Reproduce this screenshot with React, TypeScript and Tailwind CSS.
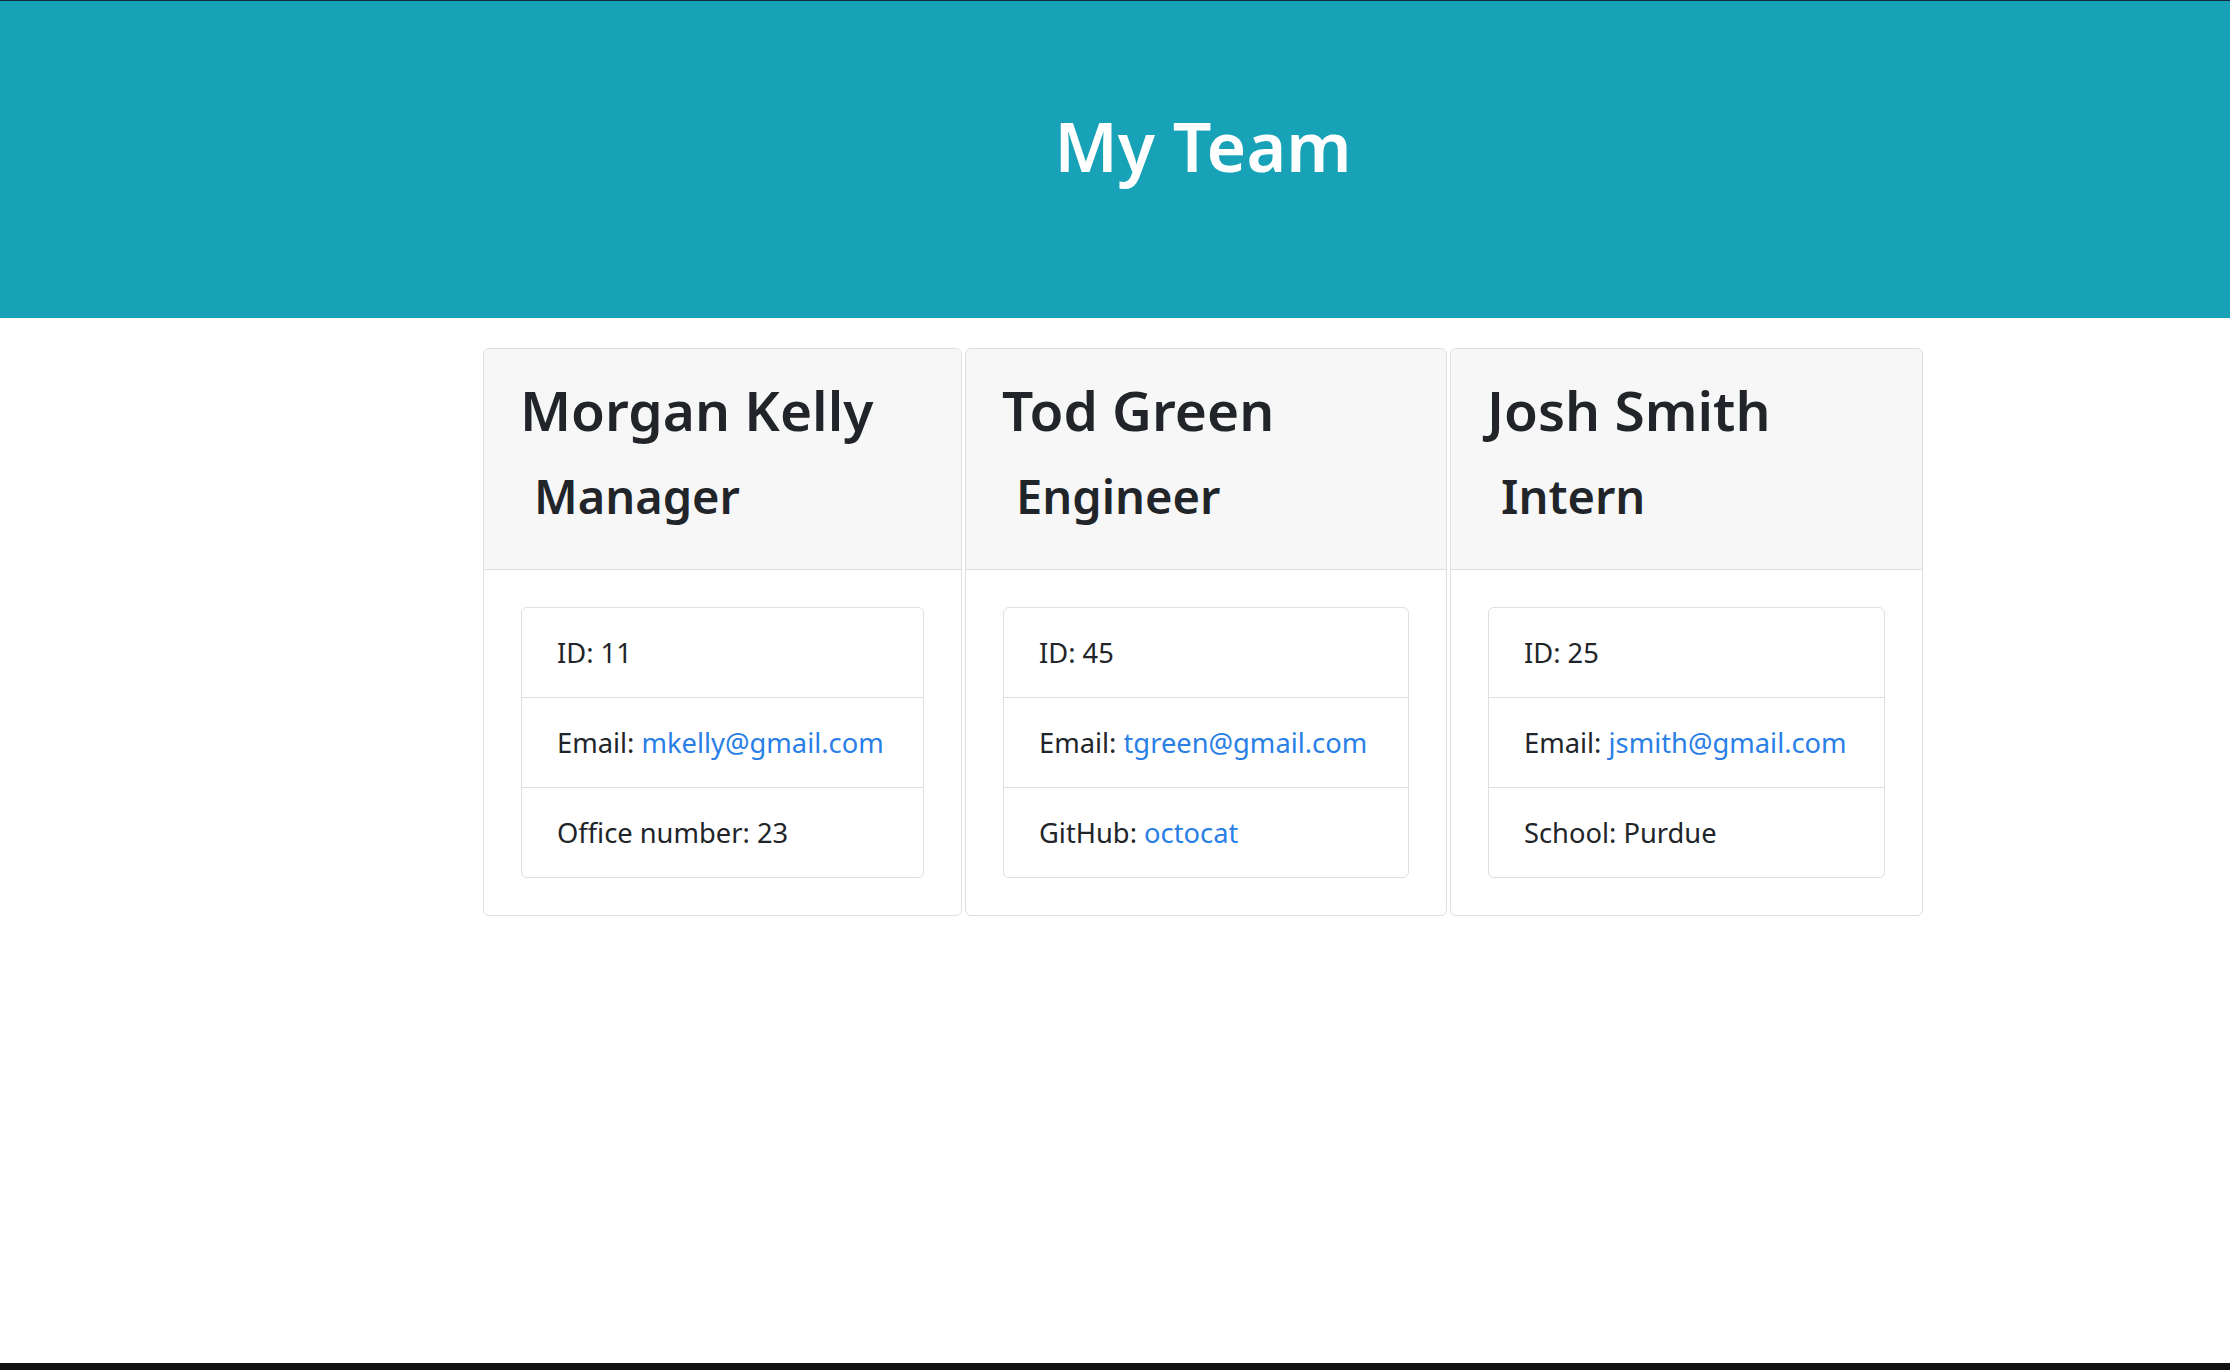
const team = [
	{
		name: "Morgan Kelly",
		role: "Manager",
		id: 11,
		email: "mkelly@gmail.com",
		extra: { label: "Office number", value: "23", link: false },
		width: "w-[479px]",
	},
	{
		name: "Tod Green",
		role: "Engineer",
		id: 45,
		email: "tgreen@gmail.com",
		extra: { label: "GitHub", value: "octocat", link: true },
		width: "w-[482px]",
	},
	{
		name: "Josh Smith",
		role: "Intern",
		id: 25,
		email: "jsmith@gmail.com",
		extra: { label: "School", value: "Purdue", link: false },
		width: "w-[473px]",
	},
]

export default function App() {
	return (
		<div className="flex min-h-screen flex-col bg-white font-['Noto_Sans',sans-serif] text-[#212529]">
			<div className="h-px bg-[#10283c]" />
			<header className="h-[317px] bg-[#17a2b8] pl-[176px] pt-[111px]">
				<h1 className="text-center text-[68px] font-semibold leading-none text-white">My Team</h1>
			</header>

			<main className="flex flex-1 justify-center pl-[176px] pt-[30px]">
				<div className="flex items-start gap-[3px]">
					{team.map((member) => (
						<div key={member.name} className={`${member.width} rounded-[6px] border border-[#dfdfdf] bg-white`}>
							<div className="rounded-t-[6px] border-b border-[#dfdfdf] bg-[#f7f7f7] pb-[49px] pl-[36px] pt-[33px]">
								<h2 className="text-[55px] font-semibold leading-none">{member.name}</h2>
								<h3 className="ml-[14px] mt-[36px] text-[47px] font-semibold leading-none">{member.role}</h3>
							</div>
							<div className="p-[37px]">
								<ul className="rounded-[6px] border border-[#dfdfdf] text-[27.3px] leading-[41px]">
									<li className="px-[35px] py-[24px]">ID: {member.id}</li>
									<li className="border-t border-[#dfdfdf] px-[35px] py-[24px]">
										Email: <a href={`mailto:${member.email}`} className="text-[#2a7fe6]">{member.email}</a>
									</li>
									<li className="border-t border-[#dfdfdf] px-[35px] py-[24px]">
										{member.extra.label}:{" "}
										{member.extra.link ? (
											<a href="#" className="text-[#2a7fe6]">{member.extra.value}</a>
										) : (
											member.extra.value
										)}
									</li>
								</ul>
							</div>
						</div>
					))}
				</div>
			</main>

			<div className="h-[7px] bg-[#111111]" />
		</div>
	)
}
